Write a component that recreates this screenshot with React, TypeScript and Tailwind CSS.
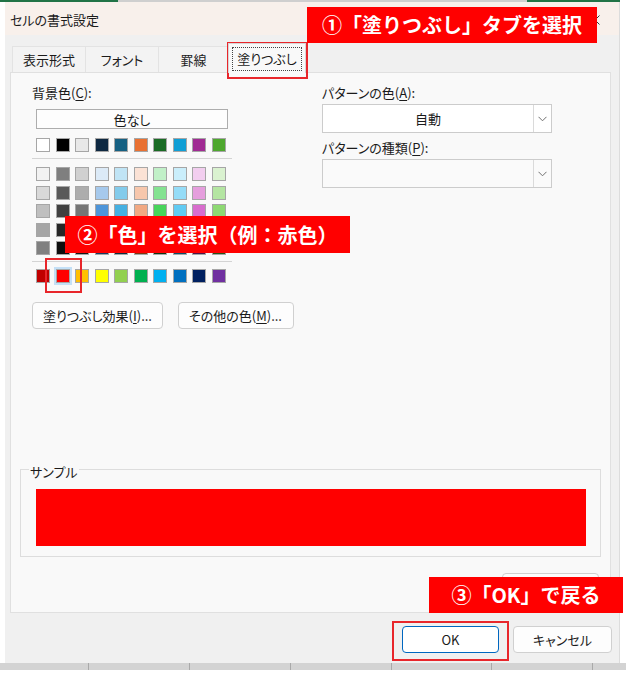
import React from "react";

const row0 = ["#FFFFFF", "#000000", "#E8E8E8", "#0E2841", "#156082", "#E97132", "#196B24", "#0F9ED5", "#A02B93", "#4EA72E"];
const theme = [
  ["#F2F2F2", "#7F7F7F", "#D0D0D0", "#DCEAF7", "#C0E4F5", "#FBE2D5", "#C1F0C8", "#CAEEFB", "#F2CEEF", "#DAF2D0"],
  ["#D9D9D9", "#595959", "#ADADAD", "#A6C9EC", "#83CBEB", "#F7C7AC", "#84E291", "#95DCF7", "#E59EDD", "#B4E5A2"],
  ["#BFBFBF", "#404040", "#757575", "#4E95D9", "#45B0E1", "#F1A983", "#47D45A", "#61CBF3", "#D86DCD", "#8ED973"],
  ["#A6A6A6", "#262626", "#3A3A3A", "#215F9A", "#0F4761", "#C04F15", "#124F1A", "#0B76A0", "#77206D", "#3A7C22"],
  ["#808080", "#0D0D0D", "#161616", "#153D64", "#0A2F41", "#80350E", "#0C3511", "#074F6A", "#4F1548", "#275317"],
];
const std = ["#C00000", "#FF0000", "#FFC000", "#FFFF00", "#92D050", "#00B050", "#00B0F0", "#0070C0", "#002060", "#7030A0"];

function Swatch({ c, sel }: { c: string; sel?: boolean }) {
  return (
    <div
      className={
        "w-[14px] h-[14px] border border-[#a6a6a6] " +
        (sel ? "shadow-[0_0_0_2px_#c4e0f6]" : "")
      }
      style={{ backgroundColor: c }}
    />
  );
}

function Row({ colors, selIdx }: { colors: string[]; selIdx?: number }) {
  return (
    <div className="flex gap-x-[5.5px]">
      {colors.map((c, i) => (
        <Swatch key={i} c={c} sel={i === selIdx} />
      ))}
    </div>
  );
}

function Chevron() {
  return (
    <svg width="9" height="6" viewBox="0 0 9 6">
      <path d="M0.5 0.8 L4.5 4.8 L8.5 0.8" fill="none" stroke="#707070" strokeWidth="1" />
    </svg>
  );
}

function Select({ text, disabled }: { text?: string; disabled?: boolean }) {
  return (
    <div
      className={
        "flex h-[29px] w-[230px] border border-[#cccccc] " +
        (disabled ? "bg-[#fafafa]" : "bg-white")
      }
    >
      <div className="flex flex-1 items-center justify-center">{text}</div>
      <div className="flex w-[18px] items-center justify-center border-l border-[#dadada]">
        <Chevron />
      </div>
    </div>
  );
}

function Btn({ children, w, primary }: { children?: React.ReactNode; w: string; primary?: boolean }) {
  return (
    <div
      className={
        "flex h-[27px] items-center justify-center rounded-[4px] border " +
        w +
        " " +
        (primary ? "border-[#0067c0] bg-white" : "border-[#d0d0d0] bg-[#fdfdfd]")
      }
    >
      {children}
    </div>
  );
}

export default function App() {
  const label = "flex items-center justify-center text-[20px] font-bold leading-none text-white bg-[#ff0000] [font-feature-settings:normal]";
  return (
    <div className="relative h-[673px] w-[626px] overflow-hidden bg-white font-['Noto_Sans_CJK_JP',sans-serif] text-[13px] text-[#1b1b1b] [font-feature-settings:'palt']">
      {/* top strip */}
      <div className="flex h-[2px]">
        <div className="w-[118px] bg-[#217346]" />
        <div className="w-[409px] bg-[#cfcfcf]" />
        <div className="w-[93px] bg-[#217346]" />
      </div>

      {/* dialog window */}
      <div className="ml-[5px] flex h-[661px] w-[615px] flex-col border-r border-[#dcdcdc] bg-[#f0f0f0]">
        {/* title bar */}
        <div className="flex h-[33px] items-center justify-between bg-[#f8f0eb] pl-[5px] pr-[19px] pt-[2px]">
          <span className="leading-[17px]">セルの書式設定</span>
          <svg width="10" height="10" viewBox="0 0 10 10">
            <path d="M0.5 0.5 L9.5 9.5 M9.5 0.5 L0.5 9.5" stroke="#333" strokeWidth="1" />
          </svg>
        </div>

        {/* tabs */}
        <div className="flex h-[37px] items-end pl-[7px]">
          <div className="flex h-[26px] w-[73px] items-center justify-center border-l border-t border-[#e3e3e3] bg-[#f3f3f3]">表示形式</div>
          <div className="flex h-[26px] w-[73px] items-center justify-center border-l border-t border-[#e3e3e3] bg-[#f3f3f3]">フォント</div>
          <div className="flex h-[26px] w-[70px] items-center justify-center border-l border-t border-[#e3e3e3] bg-[#f3f3f3]">罫線</div>
          <div className="relative z-10 -mb-px h-[30px] w-[78px] border-l border-r border-t border-[#d6d6d6] bg-[#f9f9f9] px-[3px] pt-[3px]">
            <div className="flex h-[24px] items-center justify-center border border-dotted border-[#444]">塗りつぶし</div>
          </div>
        </div>

        {/* panel */}
        <div className="ml-[5px] flex h-[541px] w-[601px] flex-col border border-[#e0e0e0] bg-[#f9f9f9] pt-[11px]">
          <div className="flex">
            {/* left column */}
            <div className="ml-[21px] flex w-[290px] flex-col">
              <div className="h-[17px] leading-[17px]">
                背景色(<span className="underline underline-offset-2">C</span>):
              </div>
              <div className="ml-[4px] mt-[8px] flex h-[20px] w-[192px] items-center justify-center border border-[#adadad] bg-[#fdfdfd] leading-none">
                色なし
              </div>
              <div className="ml-[4px] mt-[9px]">
                <Row colors={row0} />
              </div>
              <div className="mt-[6px] h-px w-[200px] bg-[#d4d4d4]" />
              <div className="ml-[4px] mt-[8px] flex flex-col gap-y-[4.6px]">
                {theme.map((r, i) => (
                  <Row key={i} colors={r} />
                ))}
              </div>
              <div className="mt-[6px] h-px w-[200px] bg-[#d4d4d4]" />
              <div className="ml-[4px] mt-[7px]">
                <Row colors={std} selIdx={1} />
              </div>
              <div className="mt-[19px] flex gap-x-[14.5px]">
                <Btn w="w-[131px]">
                  <span>
                    塗りつぶし効果(<span className="underline underline-offset-2">I</span>)...
                  </span>
                </Btn>
                <Btn w="w-[116px]">
                  <span>
                    その他の色(<span className="underline underline-offset-2">M</span>)...
                  </span>
                </Btn>
              </div>
            </div>

            {/* right column */}
            <div className="flex w-[230px] flex-col">
              <div className="h-[17px] leading-[17px]">
                パターンの色(<span className="underline underline-offset-2">A</span>):
              </div>
              <div className="mt-[3px]">
                <Select text="自動" />
              </div>
              <div className="mt-[6px] h-[17px] leading-[17px]">
                パターンの種類(<span className="underline underline-offset-2">P</span>):
              </div>
              <div className="mt-[3px]">
                <Select disabled />
              </div>
            </div>
          </div>

          {/* sample */}
          <div className="relative ml-[9px] mt-[140px] w-[581px] border border-[#dddddd] pb-[10px] pl-[15px] pr-[14px] pt-[19px]">
            <span className="absolute -top-[7px] left-[8px] bg-[#f9f9f9] px-[1px] leading-[17px]">サンプル</span>
            <div className="h-[57px] bg-[#ff0000]" />
          </div>

          {/* partially hidden button under annotation */}
          <div className="mr-[11px] mt-[16px] self-end">
            <Btn w="w-[97px]" />
          </div>
        </div>

        {/* footer */}
        <div className="flex h-[50px] items-start justify-end gap-x-[14px] pr-[7px] pt-[13px]">
          <Btn w="w-[97px]" primary>
            OK
          </Btn>
          <Btn w="w-[99px]">キャンセル</Btn>
        </div>
      </div>

      {/* excel grid below */}
      <div className="flex h-[7px] bg-[#d3d3d3]">
        <div className="w-[89px] border-r border-[#a9a9a9]" />
        <div className="w-[101px] border-r border-[#a9a9a9]" />
        <div className="w-[101px] border-r border-[#a9a9a9]" />
        <div className="w-[101px] border-r border-[#a9a9a9]" />
        <div className="w-[100px] border-r border-[#a9a9a9]" />
        <div className="w-[101px] border-r border-[#a9a9a9]" />
      </div>

      {/* annotations */}
      <div className="absolute left-[227px] top-[42px] h-[37px] w-[81px] border-2 border-[#e8262b]" />
      <div className={"absolute left-[307px] top-[7px] h-[36px] w-[290px] " + label}>①「塗りつぶし」タブを選択</div>
      <div className={"absolute left-[65px] top-[216px] h-[37px] w-[285px] " + label}>②「色」を選択（例：赤色）</div>
      <div className="absolute left-[45px] top-[258px] h-[35px] w-[37px] border-2 border-[#e8262b]" />
      <div className={"absolute left-[429px] top-[577px] h-[36px] w-[194px] " + label}>③「OK」で戻る</div>
      <div className="absolute left-[392px] top-[621px] h-[40px] w-[117px] border-2 border-[#e8262b]" />
    </div>
  );
}
